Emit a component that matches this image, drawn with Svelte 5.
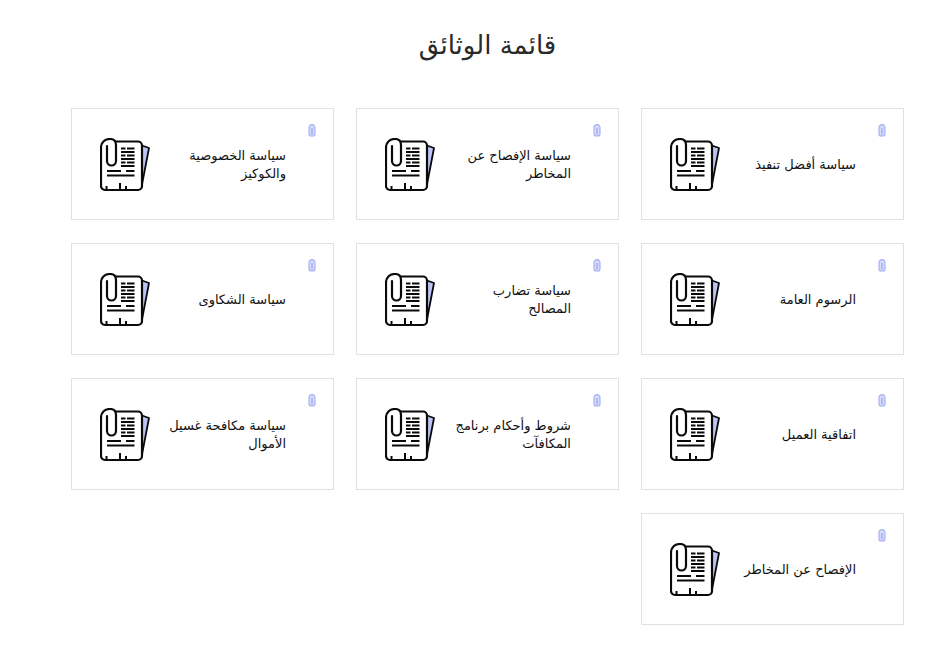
<script>
  const documents = [
    ["سياسة أفضل تنفيذ"],
    ["سياسة الإفصاح عن", "المخاطر"],
    ["سياسة الخصوصية", "والكوكيز"],
    ["الرسوم العامة"],
    ["سياسة تضارب", "المصالح"],
    ["سياسة الشكاوى"],
    ["اتفاقية العميل"],
    ["شروط وأحكام برنامج", "المكافآت"],
    ["سياسة مكافحة غسيل", "الأموال"],
    ["الإفصاح عن المخاطر"],
  ];
</script>

<main class="page" dir="rtl">
  <h1 class="page__title">قائمة الوثائق</h1>

  <div class="docs">
    {#each documents as lines}
      <a class="doc" href="#doc">
        <svg class="doc__clip" viewBox="0 0 8 13" width="8" height="13" aria-hidden="true">
          <path d="M1 10V3.600a3 3 0 0 1 6 0V10a2 2 0 0 1-2 2H3a2 2 0 0 1-2-2z" fill="#d5daf9" stroke="#a3aef5" stroke-width="1.100" />
          <path d="M4 4v6.500" stroke="#8f9cf2" stroke-width="1" />
        </svg>

        <span class="doc__name">
          {#each lines as line}
            <span>{line}</span>
          {/each}
        </span>

        <svg class="doc__icon" viewBox="0 0 50 54" width="50" height="54" aria-hidden="true">
          <path d="M42 7.500L49 10 41.500 49z" fill="#bcc4f4" stroke="#0a0a0a" stroke-width="1.800" stroke-linejoin="round" />
          <path d="M1 10V48a4 4 0 0 0 4 4H38a4 4 0 0 0 4-4V7.500a4 4 0 0 0-4-4H16V10z" fill="#fff" />
          <path d="M16 3.500H38a4 4 0 0 1 4 4V48a4 4 0 0 1-4 4H5a4 4 0 0 1-4-4V10" fill="none" stroke="#0a0a0a" stroke-width="2.200" />
          <path d="M1 10C1 4 5 1 10 1c4 0 6 2.500 6 6V23a4.500 4.500 0 0 1-9 0V8" fill="#fff" stroke="#0a0a0a" stroke-width="2.200" stroke-linecap="round" />
          <path d="M21 10.500h4.500M27 10.500h7.500M21 14h13.500M21 17.500h4.500M27 17.500h7.500M21 21h13.500M21 24.500h4.500M27 24.500h7.500M21 28h13.500" stroke="#0a0a0a" stroke-width="2" />
          <path d="M7 33h14M26 33h8.500M7 37.500h27.500" stroke="#0a0a0a" stroke-width="2" />
          <path d="M6.500 52v-4M20 52v-7M26 52v-4" stroke="#0a0a0a" stroke-width="2" />
        </svg>
      </a>
    {/each}
  </div>
</main>

<style>
  :global(body) {
    margin: 0;
    background: #fff;
  }

  .page {
    box-sizing: border-box;
    width: 936px;
    height: 650px;
    padding: 0 32px 0 71px;
    font-family: "DejaVu Sans", sans-serif;
    color: #111;
  }

  .page__title {
    box-sizing: border-box;
    height: 108px;
    margin: 0;
    padding-top: 27px;
    text-align: center;
    font-size: 26px;
    font-weight: 400;
    line-height: 36px;
    color: #2a2a2a;
  }

  .docs {
    display: grid;
    grid-template-columns: repeat(3, 263px);
    grid-auto-rows: 112px;
    column-gap: 22px;
    row-gap: 23px;
  }

  .doc {
    position: relative;
    box-sizing: border-box;
    display: flex;
    align-items: center;
    justify-content: space-between;
    padding: 2px 47px 0 28px;
    border: 1px solid #e1e1e1;
    color: #111;
    text-decoration: none;
  }

  .doc__clip {
    position: absolute;
    top: 15px;
    right: 17px;
  }

  .doc__name {
    display: flex;
    flex-direction: column;
    font-size: 13px;
    line-height: 18px;
  }

  .doc__icon {
    flex: none;
  }
</style>
